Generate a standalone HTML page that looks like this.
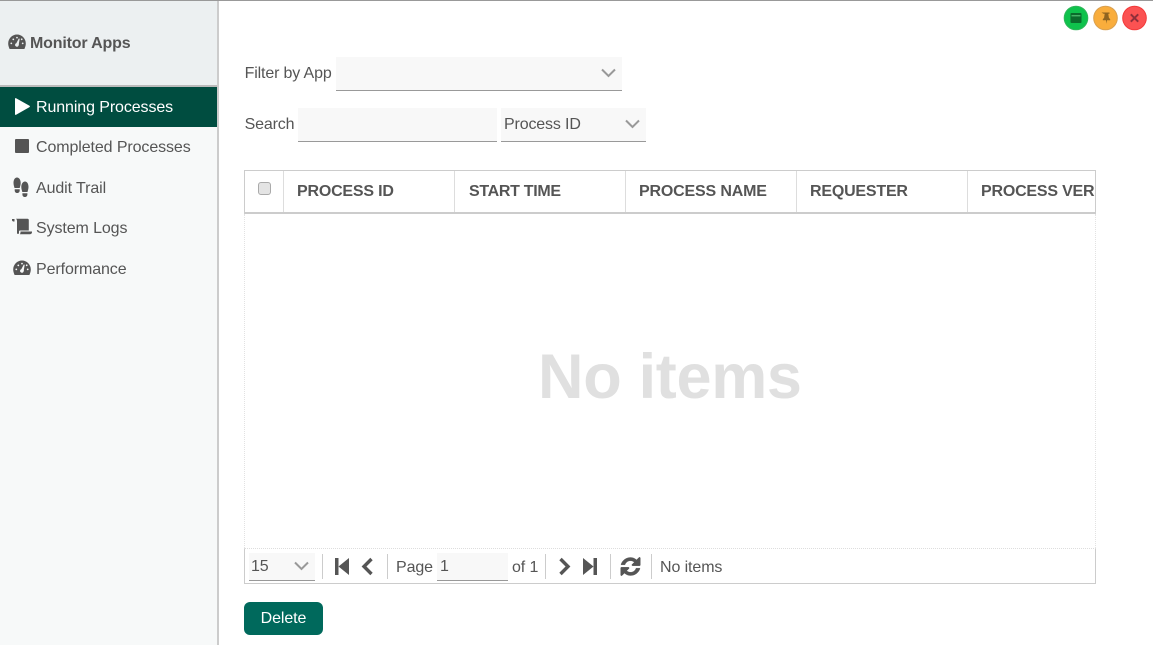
<!DOCTYPE html>
<html>
<head>
<meta charset="utf-8">
<title>Monitor Apps</title>
<style>
html,body{margin:0;padding:0;background:#fff;}
body{width:1153px;height:645px;position:relative;overflow:hidden;font-family:"Liberation Sans",Arial,sans-serif;color:#555;font-size:16px;letter-spacing:-.1px;}
.a{position:absolute;}
.t{position:absolute;white-space:nowrap;line-height:20px;}
.field{position:absolute;background:#f8f8f8;border-bottom:1px solid #999;box-sizing:border-box;}
.th{position:absolute;top:173px;height:40px;line-height:37px;font-weight:bold;color:#555;white-space:nowrap;letter-spacing:-.2px;}
.sep{position:absolute;top:554px;width:1px;height:25px;background:#ccc;}
.vl{position:absolute;top:171px;width:1px;height:41px;background:#ddd;}
</style>
</head>
<body>
<div class="a" style="left:0;top:0;width:1153px;height:1px;background:#999;"></div>

<!-- sidebar -->
<div class="a" style="left:0;top:1px;width:217px;height:644px;background:#f7f9f9;"></div>
<div class="a" style="left:217px;top:1px;width:2px;height:644px;background:#ccc;"></div>
<div class="a" style="left:0;top:1px;width:217px;height:84px;background:#ecf0f1;"></div>
<div class="a" style="left:0;top:85px;width:217px;height:2px;background:#bbb;"></div>
<div class="a" style="left:0;top:87px;width:217px;height:40px;background:#004d40;"></div>

<svg class="a" style="left:8px;top:34px" width="18" height="16" viewBox="0 0 18 16"><path fill="#555" fill-rule="evenodd" d="M9 .5C4.200.500.200 4.500.200 9.500c0 1.800.5 3.400 1.400 5.500h14.800c.9-2.100 1.400-3.700 1.400-5.500C17.800 4.500 13.800.500 9 .5zM3.300 10.300a.9.900 0 1 1 0-1.800.9.900 0 0 1 0 1.800zM5.300 6.300a.9.900 0 1 1 0-1.800.9.900 0 0 1 0 1.800zM9 4.500a.9.900 0 1 1 0-1.800.9.900 0 0 1 0 1.800zM10.600 11.500a1.800 1.800 0 0 1-3.400-1.200c.2-.5.600-.9 1.100-1l2.500-4.800.9.300-.9 5.300c.2.500.1 1-.2 1.400zM12.800 5.300a.9.900 0 1 1 1.800 0 .9.900 0 0 1-1.800 0zM14.700 10.300a.9.900 0 1 1 0-1.800.9.900 0 0 1 0 1.800z"/></svg>
<div class="t" style="left:30px;top:34px;font-weight:bold;color:#555;letter-spacing:-.17px;">Monitor Apps</div>

<svg class="a" style="left:15px;top:98px" width="15" height="17" viewBox="0 0 15 17"><path fill="#fff" d="M0 .8C0 .2.600-.1 1.100.2L14.500 7.800c.5.300.5 1 0 1.300L1.100 16.800c-.5.300-1.100 0-1.100-.6z"/></svg>
<div class="t" style="left:36px;top:98px;color:#fff;">Running Processes</div>

<div class="a" style="left:15px;top:139px;width:14px;height:14px;background:#555;border-radius:1px;"></div>
<div class="t" style="left:36px;top:138px;">Completed Processes</div>

<svg class="a" style="left:12px;top:177px" width="18" height="21" viewBox="0 0 18 21"><path fill="#555" d="M5 .5C2.700.5 1.500 3 1.500 6c0 2 .7 3.500 1 5h5.200c.3-1.500 1-3 1-5C8.700 3 7.300.5 5 .5zM2.700 12.200h5v1.300c0 1.500-1.100 2.500-2.500 2.500s-2.500-1-2.500-2.500zM13 4.500c2.300 0 3.500 2.500 3.500 5.500 0 2-.7 3.500-1 5h-5.200c-.3-1.500-1-3-1-5 0-3 1.400-5.500 3.700-5.500zM10.400 16.200h5v1.300c0 1.500-1.100 2.500-2.500 2.500s-2.500-1-2.500-2.500z"/></svg>
<div class="t" style="left:36px;top:179px;">Audit Trail</div>

<svg class="a" style="left:12px;top:218px" width="20" height="17" viewBox="0 0 20 17"><path fill="#555" d="M0 1h2.500v2.500H1L0 2.500zM4 .8h11.500c.8 0 1.300.6 1.300 1.300v10.400H8c-.6 0-1 .4-1 1v1.500c0 .6-.5 1-1 1s-1-.4-1-1V3c0-.8-.3-1.600-1-2.200zM8.500 13.500H20v.8c0 1.100-.8 1.900-1.900 1.900H7.800c.5-.5.700-1.100.7-1.800z"/></svg>
<div class="t" style="left:36px;top:219px;">System Logs</div>

<svg class="a" style="left:13px;top:260px" width="18" height="16" viewBox="0 0 18 16"><path fill="#555" fill-rule="evenodd" d="M9 .5C4.200.500.200 4.500.200 9.500c0 1.800.5 3.400 1.400 5.500h14.800c.9-2.100 1.400-3.700 1.400-5.500C17.800 4.500 13.800.500 9 .5zM3.300 10.300a.9.900 0 1 1 0-1.800.9.900 0 0 1 0 1.800zM5.300 6.300a.9.900 0 1 1 0-1.800.9.900 0 0 1 0 1.800zM9 4.500a.9.900 0 1 1 0-1.800.9.900 0 0 1 0 1.800zM10.600 11.500a1.800 1.800 0 0 1-3.400-1.200c.2-.5.600-.9 1.100-1l2.500-4.800.9.300-.9 5.300c.2.500.1 1-.2 1.400zM12.800 5.300a.9.900 0 1 1 1.800 0 .9.900 0 0 1-1.800 0zM14.700 10.300a.9.900 0 1 1 0-1.800.9.900 0 0 1 0 1.800z"/></svg>
<div class="t" style="left:36px;top:260px;">Performance</div>

<!-- window buttons -->
<svg class="a" style="left:1062px;top:4px" width="88" height="30" viewBox="0 0 88 30">
<circle cx="14" cy="14" r="11.800" fill="#0fc24c" stroke="#2fb65a" stroke-width="1"/>
<rect x="8.500" y="9" width="11" height="10" rx="1" fill="#0b6b2c"/><rect x="9.500" y="11.300" width="9" height="1" fill="#5fd080"/>
<circle cx="43.500" cy="14" r="11.800" fill="#f9ad3c" stroke="#d9a050" stroke-width="1"/>
<path fill="#8f6420" d="M39.500 8.500h8v1.300h-1.200l.6 4 1.300 1.500v1h-3.200l-.5 3.500-.5-3.500h-3.200v-1l1.300-1.500.6-4h-1.200z"/>
<circle cx="72.500" cy="14" r="11.800" fill="#fb5252" stroke="#f23a3a" stroke-width="1"/>
<path stroke="#8f2f3a" stroke-width="2" fill="none" d="M68.800 10.300l7.400 7.400M76.200 10.300l-7.400 7.400"/>
</svg>

<!-- filter row -->
<div class="t" style="left:244.600px;top:64px;letter-spacing:-.15px;">Filter by App</div>
<div class="field" style="left:336px;top:57px;width:286px;height:34px;"></div>
<svg class="a" style="left:601px;top:68px" width="15" height="10" viewBox="0 0 15 10"><path d="M1 1.500l6.500 6.500L14 1.500" fill="none" stroke="#999" stroke-width="2"/></svg>

<div class="t" style="left:244.600px;top:115px;letter-spacing:-.15px;">Search</div>
<div class="field" style="left:298px;top:108px;width:199px;height:34px;"></div>
<div class="field" style="left:501px;top:108px;width:145px;height:34px;"></div>
<div class="t" style="left:504px;top:115px;letter-spacing:-.15px;">Process ID</div>
<svg class="a" style="left:625px;top:119px" width="15" height="10" viewBox="0 0 15 10"><path d="M1 1.500l6.500 6.500L14 1.500" fill="none" stroke="#999" stroke-width="2"/></svg>

<!-- grid -->
<div class="a" style="left:244px;top:170px;width:852px;height:1px;background:#ccc;"></div>
<div class="a" style="left:244px;top:212px;width:852px;height:2px;background:#ccc;"></div>
<div class="a" style="left:244px;top:170px;width:1px;height:44px;background:#ccc;"></div>
<div class="a" style="left:1095px;top:170px;width:1px;height:44px;background:#ccc;"></div>
<div class="vl" style="left:283px;"></div>
<div class="vl" style="left:454px;"></div>
<div class="vl" style="left:625px;"></div>
<div class="vl" style="left:796px;"></div>
<div class="vl" style="left:967px;"></div>
<div class="a" style="left:258px;top:182px;width:13px;height:13px;box-sizing:border-box;background:#e4e4e4;border:1px solid #aaa;border-radius:3px;"></div>
<div class="th" style="left:297px;">PROCESS ID</div>
<div class="th" style="left:469px;letter-spacing:-.3px;">START TIME</div>
<div class="th" style="left:639px;letter-spacing:-.17px;">PROCESS NAME</div>
<div class="th" style="left:810px;">REQUESTER</div>
<div class="a" style="left:968px;top:173px;width:127px;height:39px;overflow:hidden;"><div class="th" style="left:13px;top:0;">PROCESS VERSION</div></div>

<div class="a" style="left:244px;top:214px;width:0;height:334px;border-left:1px dotted #e2e2e2;"></div>
<div class="a" style="left:1095px;top:214px;width:0;height:334px;border-left:1px dotted #e2e2e2;"></div>
<div class="a" style="left:244px;top:548px;width:852px;height:0;border-top:1px dotted #ddd;"></div>
<div class="t" style="left:538px;top:342px;font-size:63px;line-height:70px;font-weight:bold;color:#e0e0e0;letter-spacing:-.3px;">No items</div>

<!-- pager -->
<div class="a" style="left:244px;top:549px;width:1px;height:35px;background:#ccc;"></div>
<div class="a" style="left:1095px;top:549px;width:1px;height:35px;background:#ccc;"></div>
<div class="a" style="left:244px;top:583px;width:852px;height:1px;background:#ccc;"></div>
<div class="field" style="left:249px;top:553px;width:66px;height:28px;"></div>
<div class="t" style="left:251px;top:557px;">15</div>
<svg class="a" style="left:294px;top:561px" width="15" height="10" viewBox="0 0 15 10"><path d="M1 1.500l6.500 6.500L14 1.500" fill="none" stroke="#999" stroke-width="2"/></svg>
<div class="sep" style="left:322px;"></div>
<svg class="a" style="left:335px;top:558px" width="14" height="17" viewBox="0 0 14 17"><path fill="#555" d="M0 0h3.500v17H0zM3.500 8.500L14 0v17z"/></svg>
<svg class="a" style="left:359.500px;top:557px" width="14" height="19" viewBox="0 0 14 19"><path d="M11.500 2L4 9.500l7.500 7.500" fill="none" stroke="#555" stroke-width="3.400"/></svg>
<div class="sep" style="left:387px;"></div>
<div class="t" style="left:396px;top:558px;">Page</div>
<div class="field" style="left:437px;top:553px;width:71px;height:28px;"></div>
<div class="t" style="left:440px;top:557px;">1</div>
<div class="t" style="left:512px;top:558px;">of 1</div>
<div class="sep" style="left:545px;"></div>
<svg class="a" style="left:558px;top:557px" width="14" height="19" viewBox="0 0 14 19"><path d="M2.500 2L10 9.500 2.500 17" fill="none" stroke="#555" stroke-width="3.400"/></svg>
<svg class="a" style="left:583px;top:558px" width="14" height="17" viewBox="0 0 14 17"><path fill="#555" d="M14 0h-3.500v17H14zM10.500 8.500L0 0v17z"/></svg>
<div class="sep" style="left:610px;"></div>
<svg class="a" style="left:620px;top:556px" width="21" height="21" viewBox="0 0 21 21"><path fill="#555" stroke="#555" stroke-width=".4" d="M10.500 1.500c2.300 0 4.400.9 6 2.400L19 1.500c.5-.5 1.300-.1 1.300.5v7c0 .4-.3.700-.7.700h-7c-.7 0-1-.8-.5-1.300l2.200-2.200c-1.100-1-2.400-1.500-3.800-1.500-2.600 0-4.800 1.700-5.600 4.100H1C1.900 4.800 5.800 1.500 10.500 1.500zM1.400 11.300h7c.7 0 1 .8.500 1.300l-2.200 2.200c1.100 1 2.400 1.500 3.800 1.500 2.600 0 4.800-1.700 5.600-4.100H20c-.9 4-4.800 7.300-9.500 7.300-2.300 0-4.400-.9-6-2.400L2 19.500c-.5.500-1.300.1-1.300-.5v-7c0-.4.300-.7.700-.7z"/></svg>
<div class="sep" style="left:651px;"></div>
<div class="t" style="left:660px;top:558px;">No items</div>

<!-- delete -->
<div class="a" style="left:244px;top:602px;width:79px;height:33px;background:#00695c;border-radius:6px;color:#fff;text-align:center;line-height:33px;">Delete</div>
</body>
</html>
